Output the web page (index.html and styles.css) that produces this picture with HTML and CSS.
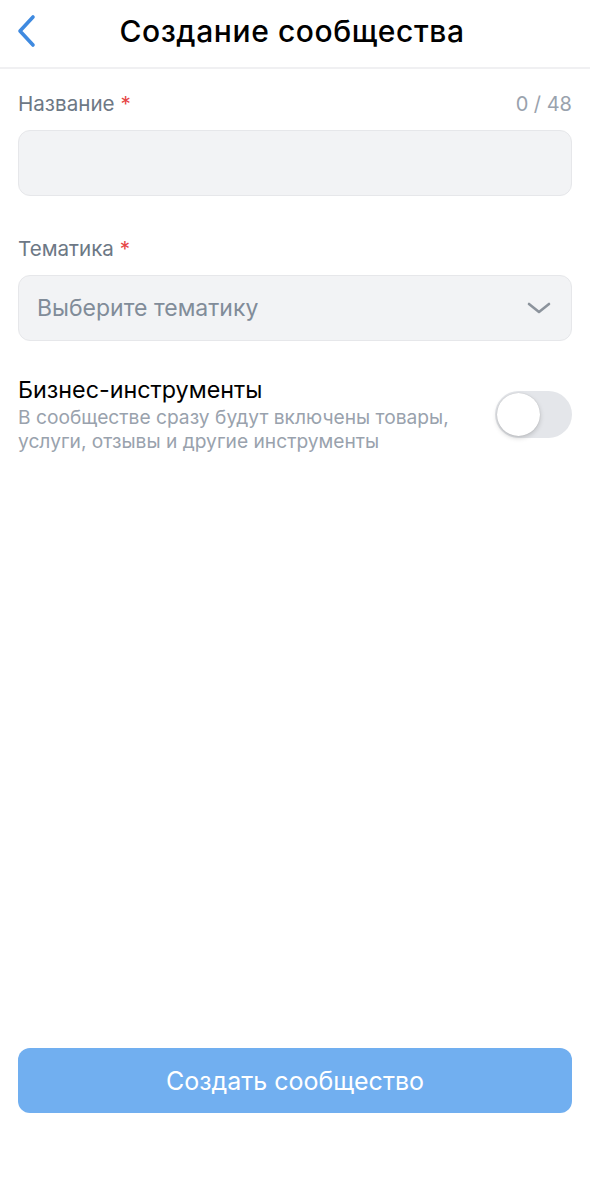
FILE: index.html
```html
<!DOCTYPE html>
<html lang="ru">
<head>
    <meta charset="UTF-8">
    <meta name="viewport" content="width=device-width, initial-scale=1.0">
    <title>Создание сообщества</title>
    <link rel="stylesheet" href="styles.css">
</head>
<body>
    <div class="page">
        <div class="header">
            <svg class="back" width="22" height="34" viewBox="0 0 22 34">
                <path d="M17 3 L4 17 L17 31" fill="none" stroke="#3f8ae0" stroke-width="3.6" stroke-linecap="round" stroke-linejoin="round"/>
            </svg>
            <div class="title">Создание сообщества</div>
        </div>

        <div class="form">
            <div class="field">
                <div class="label-row">
                    <span class="label">Название <span class="req">*</span></span>
                    <span class="counter">0 / 48</span>
                </div>
                <div class="input"></div>
            </div>

            <div class="field">
                <div class="label-row">
                    <span class="label">Тематика <span class="req">*</span></span>
                </div>
                <div class="input select">
                    <span class="placeholder">Выберите тематику</span>
                    <svg class="arrow" width="24" height="14" viewBox="0 0 24 14">
                        <path d="M2 3 L12 11 L22 3" fill="none" stroke="#8c939c" stroke-width="2.6" stroke-linecap="round" stroke-linejoin="round"/>
                    </svg>
                </div>
            </div>

            <div class="cell">
                <div class="cell-text">
                    <div class="cell-title">Бизнес-инструменты</div>
                    <div class="cell-sub">В сообществе сразу будут включены товары, услуги, отзывы и другие инструменты</div>
                </div>
                <div class="switch"><div class="knob"></div></div>
            </div>
        </div>

        <div class="footer">
            <button class="create">Создать сообщество</button>
        </div>
    </div>
</body>
</html>
```

FILE: styles.css
```css
body {
    margin: 0;
    background-color: #ffffff;
    font-family: 'Inter', 'Roboto', sans-serif;
    color: #000000;
}
.page {
    width: 590px;
    height: 1183px;
    display: flex;
    flex-direction: column;
}
.header {
    height: 69px;
    display: flex;
    align-items: center;
    justify-content: center;
    position: relative;
    border-bottom: 2px solid #f0f0f2;
    box-sizing: border-box;
}
.back {
    position: absolute;
    left: 16px;
    top: 14px;
}
.title {
    font-size: 30px;
    font-weight: 450;
    letter-spacing: 0.6px;
    margin-top: -5px;
    margin-right: 6px;
}
.form {
    padding: 0 18px 0 18px;
    flex: 1;
}
.field {
    margin-top: 23px;
}
.field + .field {
    margin-top: 41px;
}
.label-row {
    display: flex;
    justify-content: space-between;
    align-items: baseline;
    font-size: 20.6px;
    line-height: 24px;
    height: 24px;
    margin-bottom: 14px;
}
.label {
    color: #6d7885;
}
.req {
    color: #e64646;
}
.counter {
    font-size: 20px;
    color: #99a2ad;
}
.input {
    height: 66px;
    background-color: #f2f3f5;
    border: 1px solid #e6e7ea;
    border-radius: 12px;
    box-sizing: border-box;
}
.select {
    display: flex;
    align-items: center;
    justify-content: space-between;
    padding: 0 20px 0 18px;
}
.placeholder {
    font-size: 23px;
    color: #818c99;
}
.cell {
    display: flex;
    align-items: center;
    justify-content: space-between;
    margin-top: 34px;
    gap: 20px;
}
.cell-title {
    font-size: 23.3px;
    line-height: 30px;
}
.cell-sub {
    font-size: 19.2px;
    line-height: 24px;
    color: #99a2ad;
    max-width: 450px;
}
.switch {
    width: 77px;
    height: 47px;
    border-radius: 24px;
    background-color: #e4e6ea;
    flex-shrink: 0;
    position: relative;
}
.knob {
    position: absolute;
    left: 2px;
    top: 2px;
    width: 43px;
    height: 43px;
    border-radius: 50%;
    background-color: #ffffff;
    box-shadow: 0 2px 5px rgba(0, 0, 0, 0.18), 0 0 1px rgba(0, 0, 0, 0.2);
}
.footer {
    padding: 0 18px 70px 18px;
}
.create {
    width: 100%;
    height: 65px;
    border: none;
    border-radius: 12px;
    background-color: #71aff0;
    color: #ffffff;
    font-family: 'Inter', 'Roboto', sans-serif;
    font-size: 25px;
}
```
